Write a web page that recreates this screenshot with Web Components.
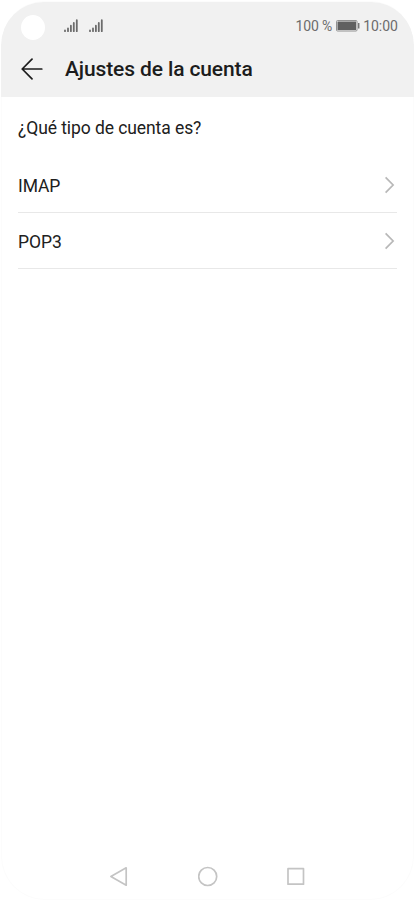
<!DOCTYPE html>
<html lang="es">
<head>
<meta charset="utf-8">
<title>Ajustes de la cuenta</title>
<style>
    body {
        margin: 0;
        background: white;
        font-family: Roboto, "Liberation Sans", sans-serif;
        color: #202020;
    }
</style>
</head>
<body>
<phone-frame>
    <status-bar slot="header" battery="100 %" time="10:00"></status-bar>
    <title-bar slot="header">Ajustes de la cuenta</title-bar>
    <option-list>
        <span slot="question">¿Qué tipo de cuenta es?</span>
        <option-item>IMAP</option-item>
        <option-item>POP3</option-item>
    </option-list>
    <nav-bar slot="footer"></nav-bar>
</phone-frame>

<script>
let templatePhoneFrame = document.createElement('template');
templatePhoneFrame.innerHTML = `
<style>
    :host {
        display: flex;
        flex-direction: column;
        box-sizing: border-box;
        width: 415px;
        height: 900px;
        padding: 1px 1px 0;
    }

    #screen {
        flex: 1;
        display: flex;
        flex-direction: column;
        box-shadow: inset 0 0 0 1px #fcfcfc;
        border-radius: 44px;
        overflow: hidden;
    }

    header {
        height: 95px;
        margin-top: 1px;
        background: #f1f1f1;
        border-radius: 43px 43px 0 0;
    }

    main {
        flex: 1;
    }
</style>
<div id="screen">
    <header><slot name="header"></slot></header>
    <main><slot></slot></main>
    <slot name="footer"></slot>
</div>
`

class PhoneFrame extends HTMLElement {
    constructor() {
        super();
        this.attachShadow({mode: "open"});
        this.shadowRoot.append(templatePhoneFrame.content.cloneNode(true));
    }
}

let templateSignalIcon = document.createElement('template');
templateSignalIcon.innerHTML = `
<style>
    :host {
        display: block;
        width: 15px;
        height: 14px;
    }

    svg {
        display: block;
    }
</style>
<svg width="15" height="14" viewBox="0 0 15 14" stroke="#6c6c6c" stroke-width="1.8" stroke-linecap="round">
    <path d="M1 12.2v-.8M4 12.2V9.4M6.9 12.2V6.7M9.8 12.2V4M12.8 12.2V1.2"/>
</svg>
`

class SignalIcon extends HTMLElement {
    constructor() {
        super();
        this.attachShadow({mode: "open"});
        this.shadowRoot.append(templateSignalIcon.content.cloneNode(true));
    }
}

let templateStatusBar = document.createElement('template');
templateStatusBar.innerHTML = `
<style>
    :host {
        display: flex;
        align-items: center;
        height: 49px;
        padding: 0 16px 0 20px;
        font-size: 14px;
        color: #6c6c6c;
    }

    #camera {
        width: 24px;
        height: 25px;
        margin-top: 2px;
        margin-right: 19px;
        border-radius: 50%;
        background: white;
    }

    signal-icon {
        margin-right: 10px;
        margin-top: -2px;
    }

    #right {
        display: flex;
        align-items: center;
        gap: 3.5px;
        margin-left: auto;
        margin-top: -2px;
    }

    #battery {
        letter-spacing: -.15px;
    }
</style>
<div id="camera"></div>
<signal-icon></signal-icon>
<signal-icon></signal-icon>
<div id="right">
    <span id="battery"></span>
    <svg width="24" height="12" viewBox="0 0 24 12">
        <rect x=".5" y=".5" width="20.5" height="10.5" rx="1" fill="#f1f1f1" stroke="#929292"/>
        <rect x="1.5" y="1.5" width="18.5" height="8.5" fill="#606060"/>
        <path d="M22.7 3v5.5" stroke="#777" stroke-width="1.5"/>
    </svg>
    <span id="time"></span>
</div>
`

class StatusBar extends HTMLElement {
    constructor() {
        super();
        this.attachShadow({mode: "open"});
        this.shadowRoot.append(templateStatusBar.content.cloneNode(true));
    }

    connectedCallback() {
        this.shadowRoot.querySelector('#battery').textContent = this.getAttribute('battery');
        this.shadowRoot.querySelector('#time').textContent = this.getAttribute('time');
    }
}

let templateTitleBar = document.createElement('template');
templateTitleBar.innerHTML = `
<style>
    :host {
        display: flex;
        align-items: center;
        gap: 21px;
        height: 36px;
        padding-left: 20px;
        font-size: 21px;
        font-weight: 500;
        letter-spacing: -.12px;
        line-height: 36px;
        color: #1c1c1c;
    }
</style>
<svg width="23" height="22" viewBox="0 0 23 22" fill="none" stroke="#1c1c1c" stroke-width="1.7" stroke-linecap="round" stroke-linejoin="round">
    <path d="M11 1.2L1.2 11 11 20.8M1.2 11h19.6"/>
</svg>
<slot></slot>
`

class TitleBar extends HTMLElement {
    constructor() {
        super();
        this.attachShadow({mode: "open"});
        this.shadowRoot.append(templateTitleBar.content.cloneNode(true));
    }
}

let templateOptionList = document.createElement('template');
templateOptionList.innerHTML = `
<style>
    :host {
        display: block;
        padding: 0 17px;
        font-size: 17.5px;
        letter-spacing: -.08px;
    }

    #question {
        height: 60px;
        line-height: 62px;
    }
</style>
<div id="question"><slot name="question"></slot></div>
<slot></slot>
`

class OptionList extends HTMLElement {
    constructor() {
        super();
        this.attachShadow({mode: "open"});
        this.shadowRoot.append(templateOptionList.content.cloneNode(true));
    }
}

let templateOptionItem = document.createElement('template');
templateOptionItem.innerHTML = `
<style>
    :host {
        display: flex;
        align-items: center;
        justify-content: space-between;
        box-sizing: border-box;
        height: 56px;
        padding-right: 2px;
        border-bottom: 1px solid #e8e8e8;
    }

    span {
        padding-top: 2px;
    }
</style>
<span><slot></slot></span>
<svg width="10" height="18" viewBox="0 0 10 18" fill="none" stroke="#b8b8b8" stroke-width="1.7">
    <path d="M.6 1.3L8.1 9 .6 16.7"/>
</svg>
`

class OptionItem extends HTMLElement {
    constructor() {
        super();
        this.attachShadow({mode: "open"});
        this.shadowRoot.append(templateOptionItem.content.cloneNode(true));
    }
}

let templateNavBar = document.createElement('template');
templateNavBar.innerHTML = `
<style>
    :host {
        display: flex;
        justify-content: center;
        align-items: center;
        gap: 68px;
        height: 46px;
    }
</style>
<svg width="20" height="22" viewBox="0 0 20 22" fill="none" stroke="#c4c4c4" stroke-width="1.7" stroke-linejoin="round">
    <path d="M16.2 1.8v17.4L.9 10.5z"/>
</svg>
<svg width="20" height="22" viewBox="0 0 20 22" fill="none" stroke="#c4c4c4" stroke-width="1.7">
    <circle cx="9.7" cy="10.5" r="9"/>
</svg>
<svg width="20" height="22" viewBox="0 0 20 22" fill="none" stroke="#c4c4c4" stroke-width="1.7" stroke-linejoin="round">
    <rect x="2" y="2.7" width="15.5" height="15.5"/>
</svg>
`

class NavBar extends HTMLElement {
    constructor() {
        super();
        this.attachShadow({mode: "open"});
        this.shadowRoot.append(templateNavBar.content.cloneNode(true));
    }
}

window.customElements.define('phone-frame', PhoneFrame);
window.customElements.define('signal-icon', SignalIcon);
window.customElements.define('status-bar', StatusBar);
window.customElements.define('title-bar', TitleBar);
window.customElements.define('option-list', OptionList);
window.customElements.define('option-item', OptionItem);
window.customElements.define('nav-bar', NavBar);
</script>
</body>
</html>
